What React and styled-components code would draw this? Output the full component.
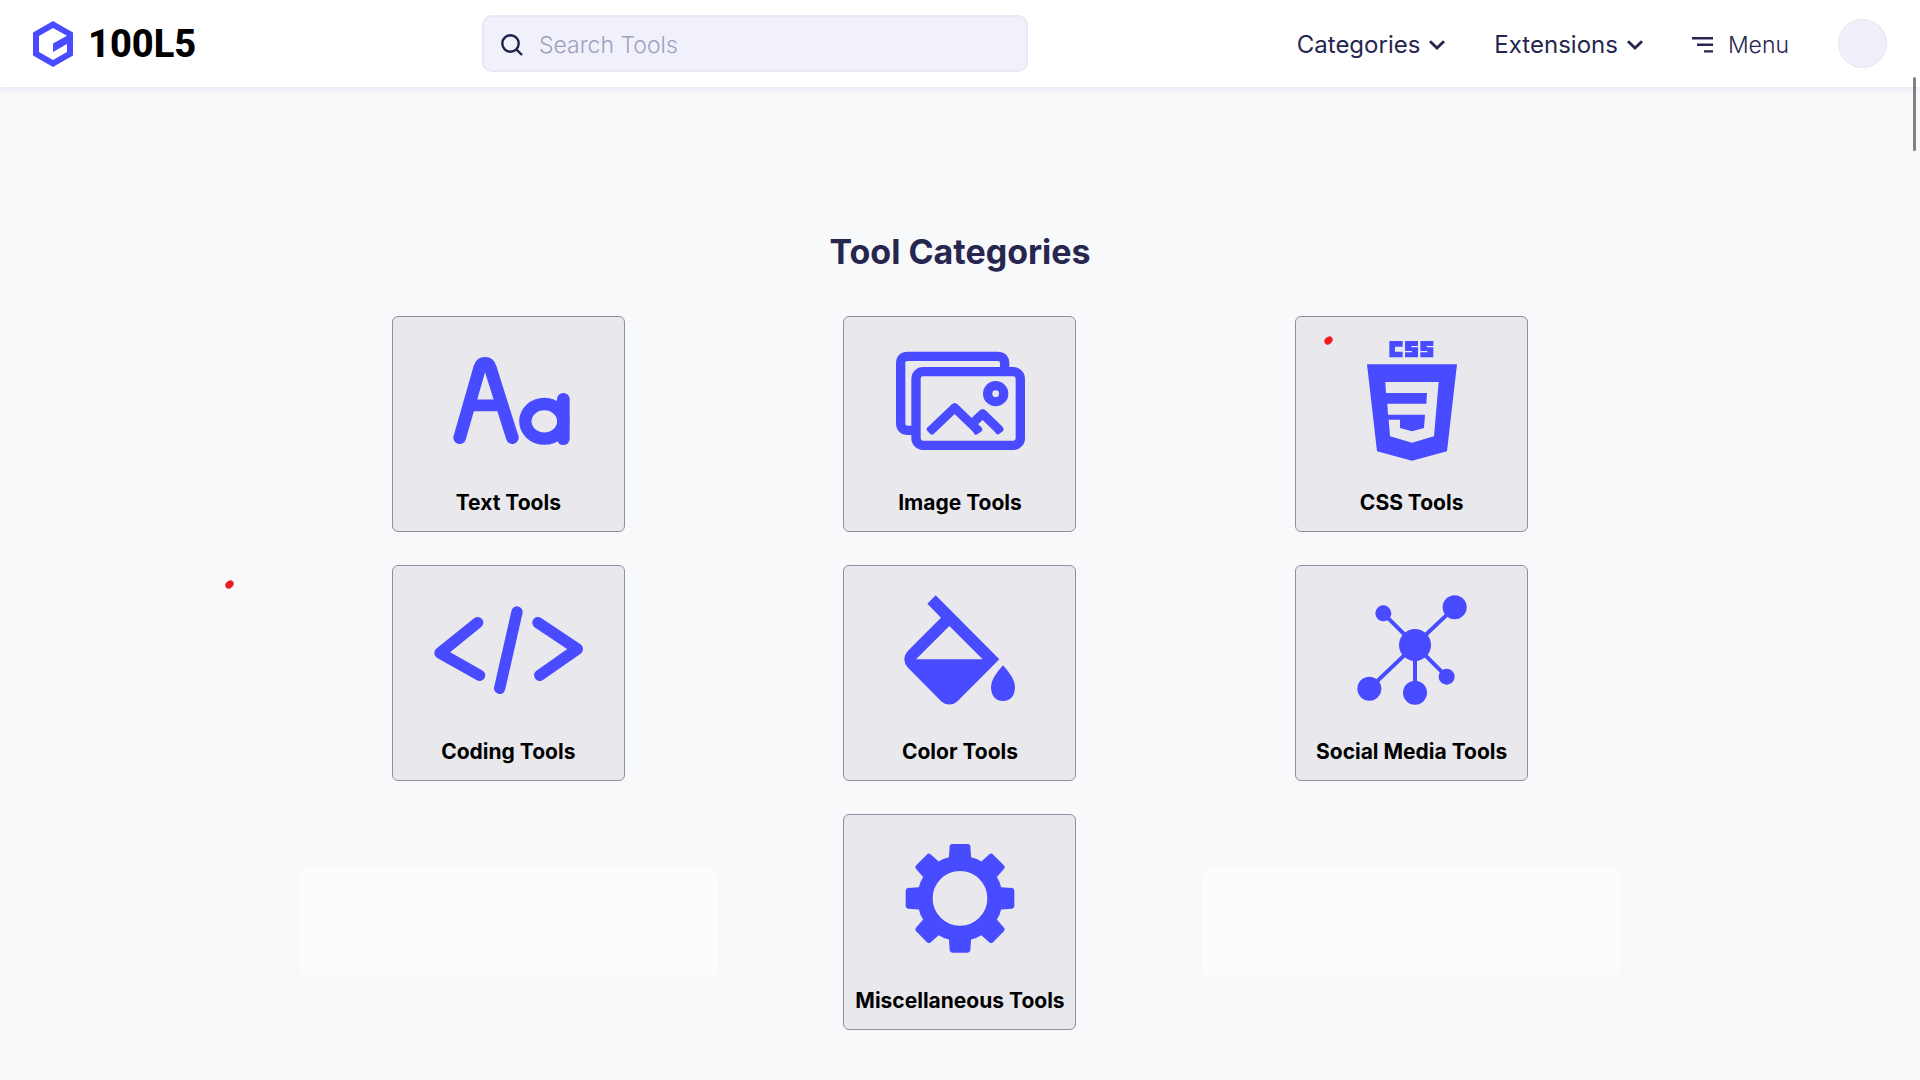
import React from "react";
import styled, { createGlobalStyle } from "styled-components";

const GlobalStyle = createGlobalStyle`
  * { box-sizing: border-box; }
  body {
    margin: 0;
    background: #f8f9fb;
    color: #26264f;
    font-family: Inter, "Noto Sans", sans-serif;
    overflow: hidden;
  }
  button, input { font: inherit; color: inherit; }
`;

const Page = styled.div`
  position: relative;
  min-height: 100vh;
`;

const Header = styled.header`
  display: grid;
  grid-template-columns: 449px minmax(200px, 546px) 1fr;
  align-items: center;
  height: 87px;
  padding: 0 33px;
  background: #fff;
  box-shadow: 0 2px 6px #e6e6f8;
`;

const Brand = styled.a`
  display: flex;
  align-items: center;
  gap: 15px;
  color: #000;
  text-decoration: none;
  svg { display: block; }
`;

const BrandName = styled.span`
  font: 800 38px/46px Roboto, sans-serif;
`;

const Search = styled.label`
  display: flex;
  align-items: center;
  gap: 15px;
  height: 57px;
  padding: 2px 16px 0;
  background: #f1f1fc;
  border: 2px solid #e8e8f7;
  border-radius: 10px;
  svg { flex: none; }
`;

const SearchInput = styled.input`
  flex: 1;
  min-width: 0;
  padding: 0;
  border: 0;
  outline: 0;
  background: none;
  font-size: 23px;
  line-height: 30px;
  font-weight: 300;
  &::placeholder { color: #a0a0bd; opacity: 1; }
`;

const Nav = styled.nav`
  display: flex;
  justify-content: flex-end;
  align-items: center;
  gap: 49px;
`;

const NavButton = styled.button`
  display: flex;
  align-items: center;
  gap: ${(p) => (p.$light ? 15 : 9)}px;
  padding: 2px 0 0;
  border: 0;
  background: none;
  font-size: ${(p) => (p.$light ? 23 : 24)}px;
  font-weight: ${(p) => (p.$light ? 300 : 400)};
  line-height: 28px;
`;

const Avatar = styled.button`
  width: 49px;
  height: 49px;
  padding: 0;
  border: 1px solid #e4e4f3;
  border-radius: 50%;
  background: #f0f0fb;
`;

const Main = styled.main`
  padding: 143px 33px 50px;
`;

const Title = styled.h2`
  margin: 0 0 42px;
  text-align: center;
  font-size: 34px;
  line-height: 44px;
  font-weight: 700;
`;

const Grid = styled.div`
  display: grid;
  grid-template-columns: repeat(3, 1fr);
  gap: 33px;
  max-width: 1322px;
  margin: 0 auto;
  justify-items: center;
  align-items: center;
`;

const Card = styled.a`
  position: relative;
  display: flex;
  flex-direction: column;
  align-items: center;
  gap: 23px;
  width: 233px;
  height: 216px;
  padding: 17px 0 0;
  border: 1px solid #8f8fa3;
  border-radius: 6px;
  background: #e9e8ed;
  color: #000;
  text-decoration: none;
  svg { display: block; flex: none; }
`;

const CardLabel = styled.span`
  font-size: 21px;
  line-height: 28px;
  font-weight: 700;
  white-space: nowrap;
`;

const Placeholder = styled.div`
  width: 100%;
  height: 110px;
  border-radius: 10px;
  background: #fcfcfd;
`;

const Dot = styled.span`
  position: absolute;
  left: ${(p) => p.$x}px;
  top: ${(p) => p.$y}px;
  width: 9px;
  height: 7px;
  border-radius: 50%;
  background: #ec1c1f;
  transform: rotate(-40deg);
`;

const ScrollThumb = styled.div`
  position: fixed;
  right: 4px;
  top: 77px;
  width: 3px;
  height: 74px;
  border-radius: 2px;
  background: #828284;
`;

const BLUE = "#484bff";

const Art = ({ box, children }) => (
  <svg width="160" height="132" viewBox={box} fill={BLUE} stroke="none" aria-hidden="true">
    {children}
  </svg>
);

const LogoMark = () => (
  <svg width="40" height="46" viewBox="0 0 40 46" fill={BLUE} aria-hidden="true">
    <path
      fillRule="evenodd"
      d="M20 0 L40 11.5 V34.5 L20 46 L0 34.5 V11.5 Z M20 7 L6 15 V31 L20 39 L34 31 V23 L20 31 V22.5 L34 14.8 Z"
    />
  </svg>
);

const SearchIcon = () => (
  <svg width="24" height="24" viewBox="0 0 24 24" fill="none" stroke="#1f1f47" strokeWidth="2.4" aria-hidden="true">
    <circle cx="10.5" cy="10.5" r="8.2" />
    <path d="M16.3 16.3 L22 22" />
  </svg>
);

const Chevron = () => (
  <svg width="16" height="10" viewBox="0 0 16 10" fill="none" stroke="#26264f" strokeWidth="2.8" aria-hidden="true">
    <path d="M1 1.2 L8 8 L15 1.2" />
  </svg>
);

const MenuIcon = () => (
  <svg width="21" height="16" viewBox="0 0 21 16" fill="#26264f" aria-hidden="true">
    <path d="M0 0h21v2.4H0z M5 6.6h16V9H5z M12 13.2h9v2.4h-9z" />
  </svg>
);

const TextArt = () => (
  <Art box="144 102 480 396">
    <g fill="none" stroke={BLUE} strokeLinecap="round" strokeLinejoin="round" strokeWidth="38">
      <path d="M239 413 L299 204 Q303 190 315 190 Q327 190 331 204 L397 413" />
      <path d="M272 316 H360" strokeWidth="35" />
      <ellipse cx="493" cy="364" rx="57" ry="52" strokeWidth="37" />
      <path d="M550 298 V416" />
    </g>
  </Art>
);

const ImageArt = () => (
  <Art box="150 102 480 396">
    <g fill="none" stroke={BLUE} strokeWidth="28">
      <rect x="258" y="215" width="313" height="221" rx="21" />
      <path d="M246 391 H234 Q212 391 212 369 V191 Q212 169 234 169 H502 Q524 169 524 191 V204" />
      <circle cx="497" cy="281" r="24" />
    </g>
    <g fill="none" stroke={BLUE} strokeWidth="27" strokeLinejoin="round" strokeLinecap="butt">
      <path d="M301 393 L374 323 L446 393" />
      <path d="M434 364 L458 341 L509 391" />
    </g>
    <g fill="none" stroke={BLUE} strokeWidth="14" strokeLinejoin="round">
      <path d="M297 388 L306 397 M438 397 L450 389 M503 396 L514 388" strokeLinecap="round" />
    </g>
  </Art>
);

const CssArt = () => (
  <Art box="156 102 480 396">
    <path d="M328 123h40v17h-23v15h23v17h-40z" />
    <path d="M375 123h39v15h-20v4h20v30h-39v-15h21v-4h-21z M421 123h39v15h-20v4h20v30h-39v-15h21v-4h-21z" />
    <path
      fillRule="evenodd"
      d="M261 193 H531 L501 454 L396 482 L291 454 Z M316 246 L318 279 H441 L439 311 H322 L324 344 H435 L432 384 L396 394 L360 384 V359 H326 L330 409 L396 428 L462 409 L476 246 Z"
    />
  </Art>
);

const CodeArt = () => (
  <Art box="144 99 480 396">
    <g fill="none" stroke={BLUE} strokeWidth="34" strokeLinecap="round" strokeLinejoin="round">
      <path d="M293 218 L180 309 L299 376" />
      <path d="M411 186 L359 415" />
      <path d="M474 218 L592 297 L479 376" />
    </g>
  </Art>
);

const BucketArt = () => (
  <Art box="150 99 480 396">
    <path
      fillRule="evenodd"
      d="M317 136 L508 328 L384 452 Q358 475 332 452 L234 353 Q211 328 234 302 L333 203 L292 161 Z M358 228 L258 328 H458 Z"
    />
    <path d="M519 346 Q555 385 555 410 C555 438 540 453 519 453 C498 453 483 438 483 410 Q483 385 519 346 Z" />
  </Art>
);

const NetworkArt = () => (
  <Art box="156 99 480 396">
    <path d="M310 190 L405 285 L524 172 M268 416 L405 285 L500 380 M405 285 V428" fill="none" stroke={BLUE} strokeWidth="12" />
    <circle cx="405" cy="285" r="48" />
    <circle cx="310" cy="190" r="24" />
    <circle cx="524" cy="172" r="36" />
    <circle cx="268" cy="416" r="36" />
    <circle cx="405" cy="428" r="36" />
    <circle cx="500" cy="380" r="24" />
  </Art>
);

const GearArt = () => (
  <Art box="150 96 480 396">
    <circle cx="390" cy="295" r="105" fill="none" stroke={BLUE} strokeWidth="46" />
    {[0, 45, 90, 135, 180, 225, 270, 315].map((a) => (
      <path
        key={a}
        transform={`rotate(${a} 390 295)`}
        d="M356 184 L359 139 Q360 132 367 132 H413 Q420 132 421 139 L424 184 Z"
      />
    ))}
  </Art>
);

const CATEGORIES = [
  { label: "Text Tools", Icon: TextArt },
  { label: "Image Tools", Icon: ImageArt },
  { label: "CSS Tools", Icon: CssArt, marked: true },
  { label: "Coding Tools", Icon: CodeArt },
  { label: "Color Tools", Icon: BucketArt },
  { label: "Social Media Tools", Icon: NetworkArt },
];

const CategoryCard = ({ label, Icon, marked }) => (
  <Card href="#">
    <Icon />
    <CardLabel>{label}</CardLabel>
    {marked && <Dot $x={28} $y={20} />}
  </Card>
);

export default function App() {
  return (
    <Page>
      <GlobalStyle />
      <Header>
        <Brand href="#">
          <LogoMark />
          <BrandName>100L5</BrandName>
        </Brand>
        <Search>
          <SearchIcon />
          <SearchInput type="text" placeholder="Search Tools" aria-label="Search Tools" />
        </Search>
        <Nav>
          <NavButton>
            Categories
            <Chevron />
          </NavButton>
          <NavButton>
            Extensions
            <Chevron />
          </NavButton>
          <NavButton $light>
            <MenuIcon />
            Menu
          </NavButton>
          <Avatar aria-label="Account" />
        </Nav>
      </Header>
      <Main>
        <Title>Tool Categories</Title>
        <Grid>
          {CATEGORIES.map((c) => (
            <CategoryCard key={c.label} {...c} />
          ))}
          <Placeholder />
          <CategoryCard label="Miscellaneous Tools" Icon={GearArt} />
          <Placeholder />
        </Grid>
      </Main>
      <Dot $x={225} $y={581} />
      <ScrollThumb />
    </Page>
  );
}
